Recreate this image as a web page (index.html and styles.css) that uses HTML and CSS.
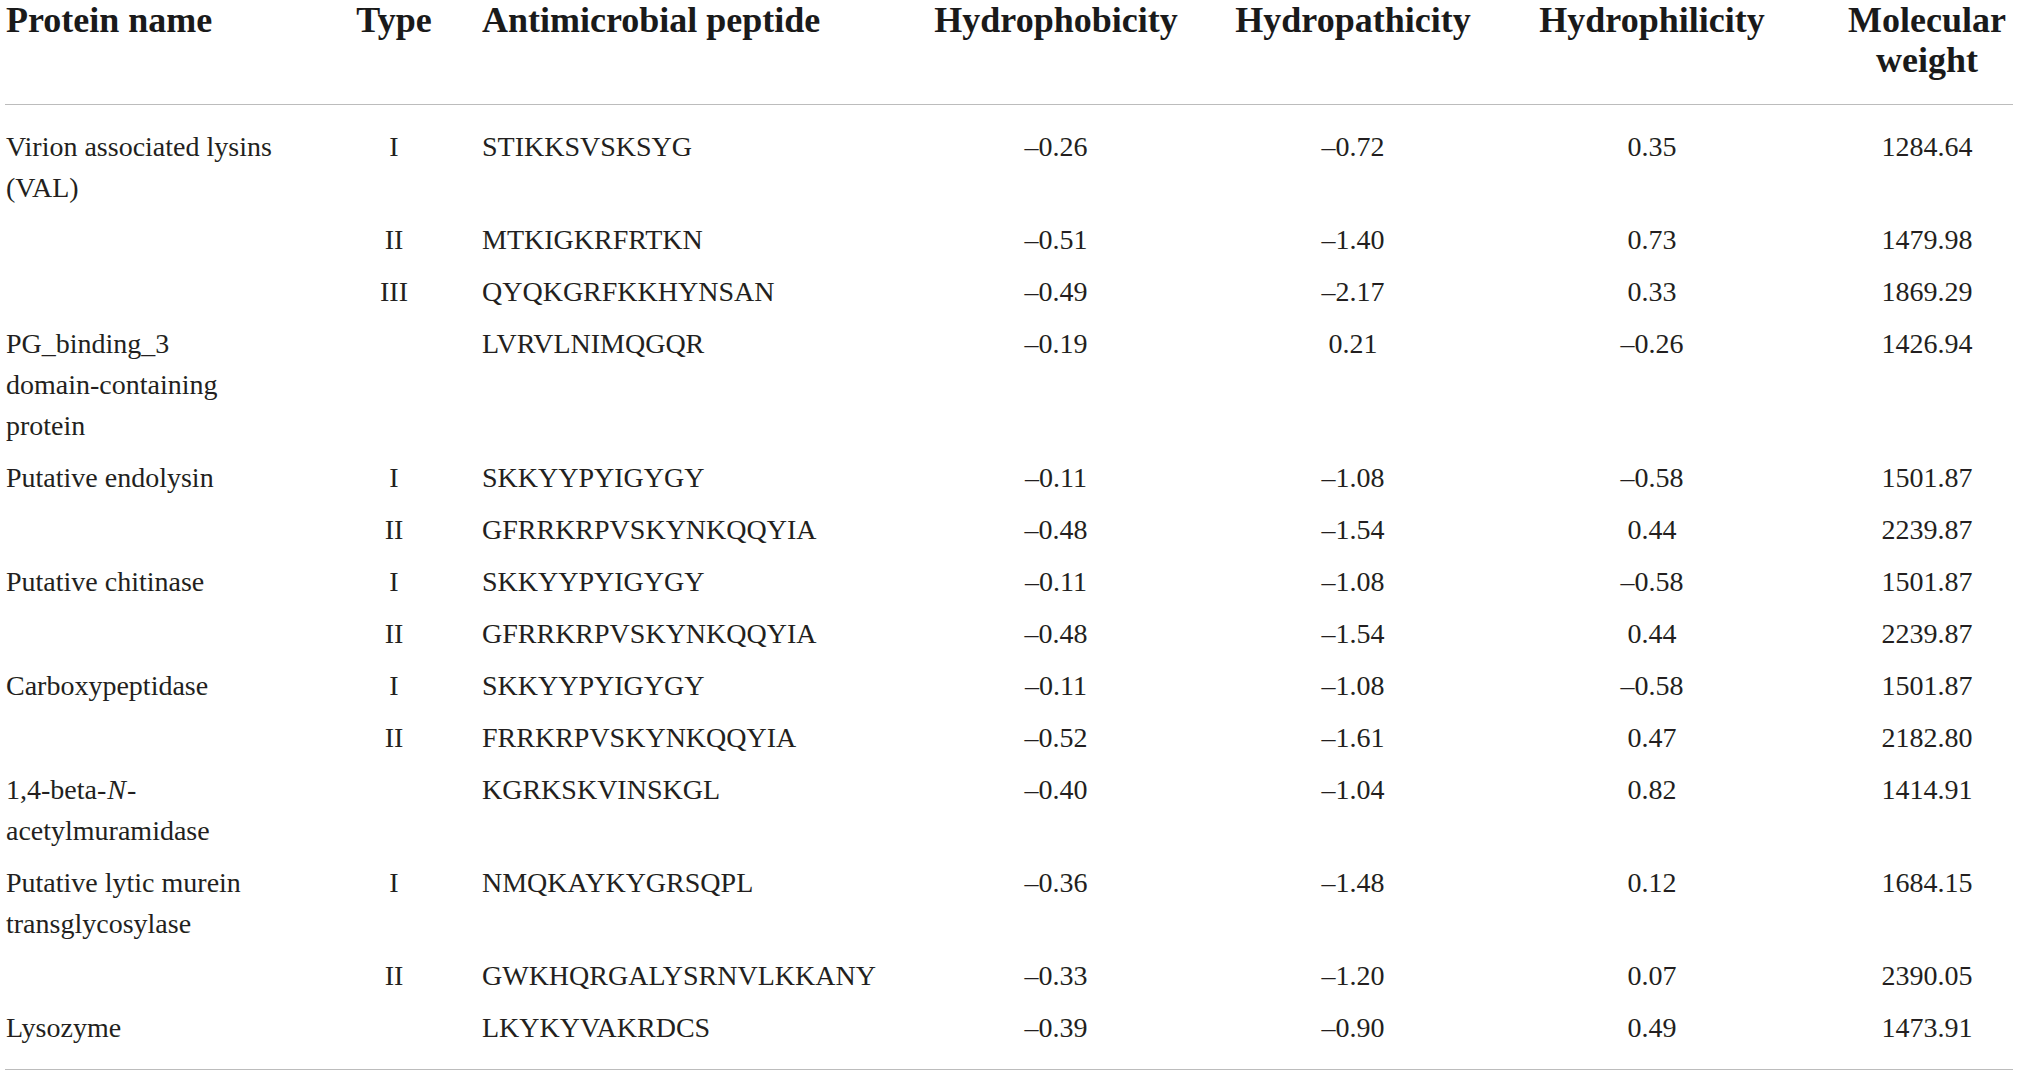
FILE: index.html
```html
<!DOCTYPE html>
<html>
<head>
<meta charset="utf-8">
<title>Antimicrobial peptides</title>
<link rel="stylesheet" href="styles.css">
</head>
<body>
<div class="page">
    <table class="peptides">
        <colgroup>
            <col class="c-name">
            <col class="c-type">
            <col class="c-seq">
            <col class="c-phob">
            <col class="c-path">
            <col class="c-phil">
            <col class="c-mw">
        </colgroup>
        <thead>
            <tr>
                <th class="name">Protein name</th>
                <th>Type</th>
                <th class="seq">Antimicrobial peptide</th>
                <th>Hydrophobicity</th>
                <th>Hydropathicity</th>
                <th>Hydrophilicity</th>
                <th class="mw">Molecular weight</th>
            </tr>
        </thead>
        <tbody>
            <tr>
                <td class="name">Virion associated lysins (VAL)</td>
                <td>I</td>
                <td class="seq">STIKKSVSKSYG</td>
                <td>–0.26</td>
                <td>–0.72</td>
                <td>0.35</td>
                <td class="mw">1284.64</td>
            </tr>
            <tr>
                <td class="name"></td>
                <td>II</td>
                <td class="seq">MTKIGKRFRTKN</td>
                <td>–0.51</td>
                <td>–1.40</td>
                <td>0.73</td>
                <td class="mw">1479.98</td>
            </tr>
            <tr>
                <td class="name"></td>
                <td>III</td>
                <td class="seq">QYQKGRFKKHYNSAN</td>
                <td>–0.49</td>
                <td>–2.17</td>
                <td>0.33</td>
                <td class="mw">1869.29</td>
            </tr>
            <tr>
                <td class="name">PG_binding_3 <span class="nowrap">domain-containing</span> protein</td>
                <td></td>
                <td class="seq">LVRVLNIMQGQR</td>
                <td>–0.19</td>
                <td>0.21</td>
                <td>–0.26</td>
                <td class="mw">1426.94</td>
            </tr>
            <tr>
                <td class="name">Putative endolysin</td>
                <td>I</td>
                <td class="seq">SKKYYPYIGYGY</td>
                <td>–0.11</td>
                <td>–1.08</td>
                <td>–0.58</td>
                <td class="mw">1501.87</td>
            </tr>
            <tr>
                <td class="name"></td>
                <td>II</td>
                <td class="seq">GFRRKRPVSKYNKQQYIA</td>
                <td>–0.48</td>
                <td>–1.54</td>
                <td>0.44</td>
                <td class="mw">2239.87</td>
            </tr>
            <tr>
                <td class="name">Putative chitinase</td>
                <td>I</td>
                <td class="seq">SKKYYPYIGYGY</td>
                <td>–0.11</td>
                <td>–1.08</td>
                <td>–0.58</td>
                <td class="mw">1501.87</td>
            </tr>
            <tr>
                <td class="name"></td>
                <td>II</td>
                <td class="seq">GFRRKRPVSKYNKQQYIA</td>
                <td>–0.48</td>
                <td>–1.54</td>
                <td>0.44</td>
                <td class="mw">2239.87</td>
            </tr>
            <tr>
                <td class="name">Carboxypeptidase</td>
                <td>I</td>
                <td class="seq">SKKYYPYIGYGY</td>
                <td>–0.11</td>
                <td>–1.08</td>
                <td>–0.58</td>
                <td class="mw">1501.87</td>
            </tr>
            <tr>
                <td class="name"></td>
                <td>II</td>
                <td class="seq">FRRKRPVSKYNKQQYIA</td>
                <td>–0.52</td>
                <td>–1.61</td>
                <td>0.47</td>
                <td class="mw">2182.80</td>
            </tr>
            <tr>
                <td class="name">1,4-beta-<i class="gene">N</i>-<span class="nowrap">acetylmuramidase</span></td>
                <td></td>
                <td class="seq">KGRKSKVINSKGL</td>
                <td>–0.40</td>
                <td>–1.04</td>
                <td>0.82</td>
                <td class="mw">1414.91</td>
            </tr>
            <tr>
                <td class="name">Putative lytic murein transglycosylase</td>
                <td>I</td>
                <td class="seq">NMQKAYKYGRSQPL</td>
                <td>–0.36</td>
                <td>–1.48</td>
                <td>0.12</td>
                <td class="mw">1684.15</td>
            </tr>
            <tr>
                <td class="name"></td>
                <td>II</td>
                <td class="seq">GWKHQRGALYSRNVLKKANY</td>
                <td>–0.33</td>
                <td>–1.20</td>
                <td>0.07</td>
                <td class="mw">2390.05</td>
            </tr>
            <tr>
                <td class="name">Lysozyme</td>
                <td></td>
                <td class="seq">LKYKYVAKRDCS</td>
                <td>–0.39</td>
                <td>–0.90</td>
                <td>0.49</td>
                <td class="mw">1473.91</td>
            </tr>
        </tbody>
    </table>
</div>
</body>
</html>
```

FILE: styles.css
```css
body {
    margin: 0;
    background: #fff;
    color: #231f20;
    font-family: "Liberation Serif", "Times New Roman", serif;
}

.page {
    padding: 0 6px 0 5px;
}

.peptides {
    width: 2008px;
    table-layout: fixed;
    border-collapse: collapse;
    border-bottom: 1px solid #bcbcbc;
}

.c-name { width: 315px; }
.c-type { width: 148px; }
.c-seq  { width: 463px; }
.c-phob { width: 250px; }
.c-path { width: 344px; }
.c-phil { width: 254px; }
.c-mw   { width: 234px; }

.peptides th {
    font-size: 36px;
    line-height: 40px;
    font-weight: bold;
    color: #1a1a1a;
    text-align: center;
    vertical-align: top;
    padding: 0 0 24px;
    border-bottom: 1px solid #bcbcbc;
    white-space: nowrap;
}

.peptides th.mw {
    white-space: normal;
}

.peptides td {
    font-size: 28px;
    line-height: 41px;
    text-align: center;
    vertical-align: top;
    padding: 5px 0 6px;
}

.peptides tbody tr:first-child td {
    padding-top: 21px;
}

.peptides tbody tr:last-child td {
    padding-bottom: 21px;
}

.peptides .name {
    text-align: left;
    padding-left: 1px;
    padding-right: 29px;
}

.peptides .seq {
    text-align: left;
    padding-left: 14px;
}

.peptides .mw {
    padding-left: 62px;
}

.gene {
    padding: 0 1px 0 1px;
}

.nowrap {
    white-space: nowrap;
}
```
